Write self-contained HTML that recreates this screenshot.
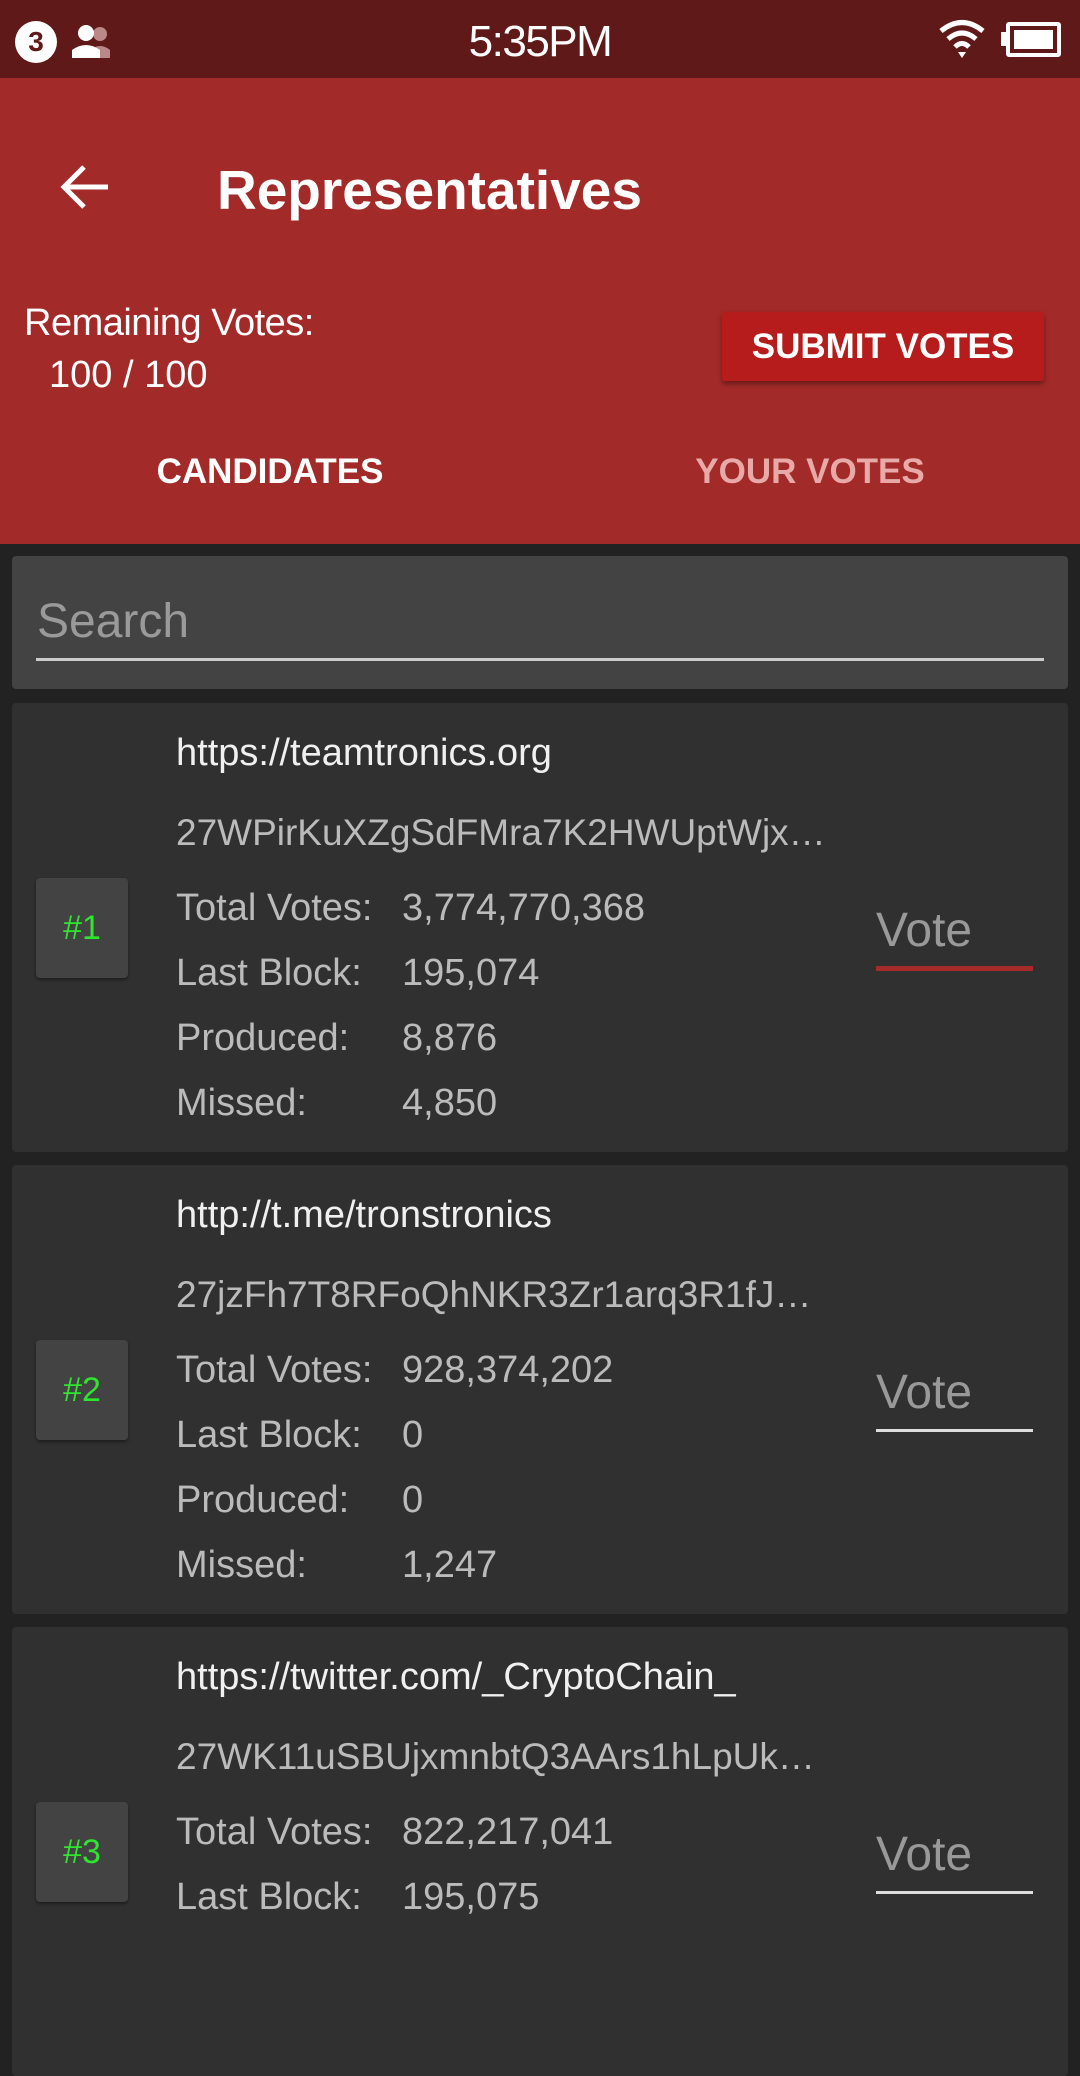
<!DOCTYPE html>
<html><head><meta charset="utf-8"><style>
*{margin:0;padding:0;box-sizing:border-box}
body{width:1080px;height:1920px;background:#222;font-family:"Liberation Sans",sans-serif;overflow:hidden;position:relative}
.abs{position:absolute;white-space:nowrap}
#sb{position:absolute;left:0;top:0;width:1080px;height:78px;background:#5f1918}
#hd{position:absolute;left:0;top:78px;width:1080px;height:466px;background:#a22a28}
.card{position:absolute;left:12px;width:1056px;height:449px;background:#303030;border-radius:4px}
.url{position:absolute;left:164px;top:29px;font-size:38px;color:#f0f0f0}
.addr{position:absolute;left:164px;top:109px;font-size:37px;color:#bbb}
.lab{position:absolute;left:164px;font-size:38px;color:#bbb}
.val{position:absolute;left:390px;font-size:38px;color:#bbb}
.rank{position:absolute;left:24px;top:175px;width:92px;height:100px;background:#434343;border-radius:4px;color:#2ee62e;font-size:34px;display:flex;align-items:center;justify-content:center;box-shadow:0 2px 3px rgba(0,0,0,.4)}
.vote{position:absolute;left:864px;top:200px;font-size:48px;color:#999}
.vl{position:absolute;left:864px;top:264px;width:157px;height:3px;background:#ddd}
</style></head><body>
<div id="sb">
 <div class="abs" style="left:15px;top:21px;width:42px;height:42px;border-radius:50%;background:#fff;color:#5f1918;font-weight:bold;font-size:28px;text-align:center;line-height:42px">3</div>
 <svg class="abs" style="left:72px;top:24px" width="46" height="34" viewBox="0 0 46 34"><circle cx="28" cy="10" r="7" fill="#b88"/><path d="M18 34 v-8 q10 -8 20 0 v8z" fill="#b88"/><circle cx="14" cy="9" r="8" fill="#fff"/><path d="M0 34 v-8 q14 -10 28 0 v8z" fill="#fff"/></svg>
 <div class="abs" style="left:0;width:1080px;text-align:center;top:17px;font-size:44px;color:#fff;letter-spacing:-1.5px">5:35PM</div>
 <svg class="abs" style="left:938px;top:18px" width="48" height="40" viewBox="0 0 48 40"><path d="M3 13 Q24 -4 45 13" stroke="#fff" stroke-width="5" fill="none"/><path d="M10 21 Q24 9 38 21" stroke="#fff" stroke-width="5" fill="none"/><path d="M17 29 Q24 22 31 29" stroke="#fff" stroke-width="5" fill="none"/><path d="M20 34 h8 l-4 6z" fill="#fff"/></svg>
 <div class="abs" style="left:1006px;top:22px;width:55px;height:35px;border:4px solid #fff;border-radius:3px"><div style="margin:4px;height:19px;background:#fff"></div></div>
 <div class="abs" style="left:1001px;top:32px;width:6px;height:14px;background:#fff"></div>
</div>
<div id="hd">
 <svg class="abs" style="left:60px;top:86px" width="50" height="46" viewBox="0 0 50 46"><path d="M48 23 H5 M24 3 L4 23 L24 43" stroke="#fff" stroke-width="5" fill="none"/></svg>
 <div class="abs" style="left:217px;top:80px;font-size:55px;font-weight:bold;color:#fff">Representatives</div>
 <div class="abs" style="left:24px;top:224px;font-size:38px;color:#fff;letter-spacing:-0.5px">Remaining Votes:</div>
 <div class="abs" style="left:49px;top:276px;font-size:38px;color:#fff">100 / 100</div>
 <div class="abs" style="left:722px;top:234px;width:322px;height:69px;background:#b71c1c;border-radius:3px;box-shadow:0 3px 5px rgba(0,0,0,.35);color:#fff;font-weight:bold;font-size:35px;text-align:center;line-height:69px">SUBMIT VOTES</div>
 <div class="abs" style="left:0;width:540px;text-align:center;top:374px;font-size:35px;font-weight:bold;color:#fff">CANDIDATES</div>
 <div class="abs" style="left:540px;width:540px;text-align:center;top:374px;font-size:35px;font-weight:bold;color:#e7aaa8">YOUR VOTES</div>
</div>
<div class="abs" style="left:12px;top:556px;width:1056px;height:133px;background:#434343;border-radius:4px">
 <div class="abs" style="left:25px;top:38px;font-size:48px;color:#9a9a9a">Search</div>
 <div class="abs" style="left:24px;top:102px;width:1008px;height:3px;background:#ccc"></div>
</div>

<div class="card" style="top:703px">
 <div class="url">https://teamtronics.org</div>
 <div class="addr">27WPirKuXZgSdFMra7K2HWUptWjx…</div>
 <div class="rank">#1</div>
 <div class="lab" style="top:184px">Total Votes:</div><div class="val" style="top:184px">3,774,770,368</div>
 <div class="lab" style="top:249px">Last Block:</div><div class="val" style="top:249px">195,074</div>
 <div class="lab" style="top:314px">Produced:</div><div class="val" style="top:314px">8,876</div>
 <div class="lab" style="top:379px">Missed:</div><div class="val" style="top:379px">4,850</div>
 <div class="vote">Vote</div><div class="vl" style="background:#a52a28;height:5px;top:263px"></div>
</div>

<div class="card" style="top:1165px">
 <div class="url">http://t.me/tronstronics</div>
 <div class="addr">27jzFh7T8RFoQhNKR3Zr1arq3R1fJ…</div>
 <div class="rank">#2</div>
 <div class="lab" style="top:184px">Total Votes:</div><div class="val" style="top:184px">928,374,202</div>
 <div class="lab" style="top:249px">Last Block:</div><div class="val" style="top:249px">0</div>
 <div class="lab" style="top:314px">Produced:</div><div class="val" style="top:314px">0</div>
 <div class="lab" style="top:379px">Missed:</div><div class="val" style="top:379px">1,247</div>
 <div class="vote">Vote</div><div class="vl"></div>
</div>

<div class="card" style="top:1627px">
 <div class="url">https://twitter.com/_CryptoChain_</div>
 <div class="addr">27WK11uSBUjxmnbtQ3AArs1hLpUk…</div>
 <div class="rank">#3</div>
 <div class="lab" style="top:184px">Total Votes:</div><div class="val" style="top:184px">822,217,041</div>
 <div class="lab" style="top:249px">Last Block:</div><div class="val" style="top:249px">195,075</div>
 <div class="vote">Vote</div><div class="vl"></div>
</div>
</body></html>
